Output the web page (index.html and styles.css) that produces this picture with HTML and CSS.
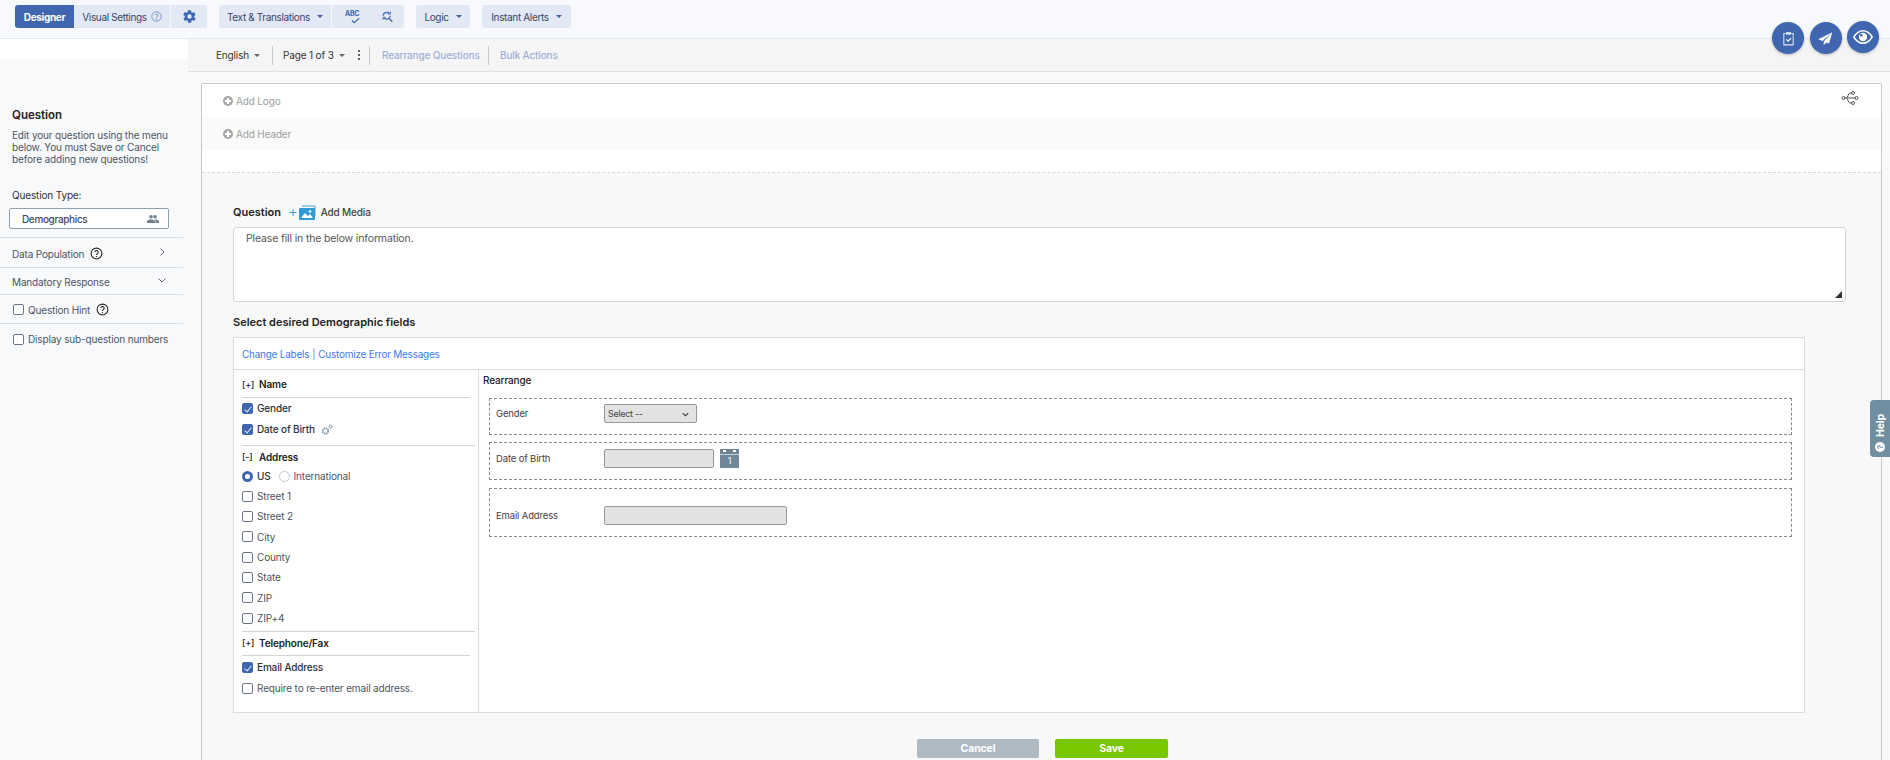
FILE: index.html
```html
<!DOCTYPE html>
<html lang="en">
<head>
<meta charset="utf-8">
<title>Question Designer</title>
<link rel="stylesheet" href="styles.css">
</head>
<body>
<header class="topbar">
  <div class="group">
    <button class="tb active w-designer">Designer</button>
    <button class="tb w-visual">Visual Settings
      <svg class="q" viewBox="0 0 14 14"><circle cx="7" cy="7" r="6" fill="none" stroke="#5f7fb8"/><path d="M5.2 5.5a1.8 1.8 0 1 1 2.7 1.6c-.6.4-.9.7-.9 1.4" fill="none" stroke="#5f7fb8"/><circle cx="7" cy="10.4" r=".7" fill="#5f7fb8"/></svg>
    </button>
    <button class="tb w-gear"><svg class="ic15" viewBox="0 0 24 24"><path fill="#3f66ae" d="M19.4 13a7.5 7.5 0 0 0 0-2l2.1-1.6a.5.5 0 0 0 .1-.7l-2-3.4a.5.5 0 0 0-.6-.2l-2.5 1a7.4 7.4 0 0 0-1.7-1l-.4-2.7a.5.5 0 0 0-.5-.4h-4a.5.5 0 0 0-.5.4l-.4 2.7a7.4 7.4 0 0 0-1.7 1l-2.5-1a.5.5 0 0 0-.6.2l-2 3.4a.5.5 0 0 0 .1.7L4.6 11a7.5 7.5 0 0 0 0 2l-2.1 1.6a.5.5 0 0 0-.1.7l2 3.4c.1.2.4.3.6.2l2.5-1a7.4 7.4 0 0 0 1.7 1l.4 2.7c0 .2.3.4.5.4h4c.2 0 .5-.2.5-.4l.4-2.7a7.4 7.4 0 0 0 1.7-1l2.5 1c.2.1.5 0 .6-.2l2-3.4a.5.5 0 0 0-.1-.7zM12 15.5a3.5 3.5 0 1 1 0-7 3.5 3.5 0 0 1 0 7z"/></svg></button>
  </div>
  <div class="group g-next">
    <button class="tb w-text">Text &amp; Translations <i class="caret"></i></button>
    <button class="tb w-spell">
      <span class="abc">ABC<svg class="abc-check" viewBox="0 0 10 7"><path d="M1 3.5l2.6 2.5L9 1" fill="none" stroke="#3f66ae" stroke-width="1.3"/></svg></span>
      <svg class="ic13" viewBox="0 0 16 16"><path d="M2.5 7a4.5 4.5 0 0 1 7.8-2.6M11.5 7a4.5 4.5 0 0 1-7.8 2.6" fill="none" stroke="#3f66ae" stroke-width="1.5"/><path d="M8.5 5h3V2M5.5 9h-3v3" fill="none" stroke="#3f66ae" stroke-width="1.2"/><path d="M10 10.5l4 4" stroke="#3f66ae" stroke-width="1.6"/></svg>
    </button>
  </div>
  <div class="group g-next"><button class="tb w-logic">Logic <i class="caret"></i></button></div>
  <div class="group g-next"><button class="tb w-alert">Instant Alerts <i class="caret"></i></button></div>
</header>

<div class="fabs">
  <button class="fab"><svg viewBox="0 0 20 20" class="fab-ic"><path d="M6.500 4H4.500v13.500h11V4h-2" fill="none" stroke="#dfe6f4" stroke-width="1.200"/><path d="M7 2.500h6v3H7z" fill="#dfe6f4"/><path d="M7.500 11l2 2 3.500-3.500" fill="none" stroke="#fff" stroke-width="1.400"/></svg></button>
  <button class="fab"><svg viewBox="0 0 20 20" class="fab-ic"><path d="M18 2.500L1.500 11l5 1.800zM18 2.500L8 13.500l-.2 4.500 3.400-3.300 3 1.300z" fill="#fff"/></svg></button>
  <button class="fab up"><svg viewBox="0 0 24 24" class="fab-eye"><path d="M1 12c3-5 7-7.500 11-7.500S20 7 23 12c-3 5-7 7.500-11 7.500S4 17 1 12z" fill="none" stroke="#fff" stroke-width="1.800"/><circle cx="12" cy="12" r="5" fill="#fff"/><circle cx="10" cy="10" r="1.500" fill="#3f66ae"/></svg></button>
</div>

<div class="body">
  <aside class="side">
    <div class="side-blank"></div>
    <div class="side-intro">
      <h2 class="side-title">Question</h2>
      <p class="side-text">Edit your question using the menu below. You must Save or Cancel before adding new questions!</p>
      <div class="side-label">Question Type:</div>
      <div class="type-select"><span>Demographics</span>
        <svg class="ic12" viewBox="0 0 24 24"><path fill="#6f7f90" d="M16 11a3.500 3.500 0 1 0 0-7 3.500 3.500 0 0 0 0 7zm-8 0a3.500 3.500 0 1 0 0-7 3.500 3.500 0 0 0 0 7zm0 2c-2.700 0-8 1.300-8 4v3h16v-3c0-2.700-5.300-4-8-4zm8 0h-1c1.200.9 2 2.100 2 4v3h7v-3c0-2.700-5.300-4-8-4z"/></svg>
      </div>
    </div>
    <div class="side-row h30"><span>Data Population</span>
      <svg class="help-ic" viewBox="0 0 14 14"><circle cx="7" cy="7" r="5.800" fill="none" stroke="#222" stroke-width="1.100"/><path d="M5.200 5.500a1.800 1.800 0 1 1 2.700 1.600c-.6.400-.9.700-.9 1.400" fill="none" stroke="#222" stroke-width="1.100"/><circle cx="7" cy="10.300" r=".7" fill="#222"/></svg>
      <svg class="chev" viewBox="0 0 10 10"><path d="M3.500 1.500L7 5 3.500 8.500" fill="none" stroke="#667" stroke-width="1"/></svg>
    </div>
    <div class="side-row h27"><span>Mandatory Response</span>
      <svg class="chev" viewBox="0 0 10 10"><path d="M1.500 3.500L5 7l3.500-3.500" fill="none" stroke="#667" stroke-width="1"/></svg>
    </div>
    <div class="side-row h29"><i class="cb"></i><span>Question Hint</span>
      <svg class="help-ic" viewBox="0 0 14 14"><circle cx="7" cy="7" r="5.800" fill="none" stroke="#222" stroke-width="1.100"/><path d="M5.200 5.500a1.800 1.800 0 1 1 2.700 1.600c-.6.400-.9.700-.9 1.400" fill="none" stroke="#222" stroke-width="1.100"/><circle cx="7" cy="10.300" r=".7" fill="#222"/></svg>
    </div>
    <div class="side-row h29 last"><i class="cb"></i><span>Display sub-question numbers</span></div>
  </aside>

  <main class="main">
    <nav class="subbar">
      <span class="sub-item w-eng">English <i class="caret grey"></i></span>
      <span class="sub-item w-page">Page 1 of 3 <i class="caret grey"></i><i class="dots"></i></span>
      <span class="sub-link w-rearr">Rearrange Questions</span>
      <span class="sub-link">Bulk Actions</span>
    </nav>
    <div class="canvas">
      <section class="frame">
        <div class="head-row h-logo"><span class="plus"></span>Add Logo
          <svg class="usb" viewBox="0 0 18 16"><g fill="none" stroke="#555" stroke-width="1"><path d="M3 8h12M5.500 8c1.500 0 1.500-5 3.500-5h1.500M5.500 8c1.500 0 1.500 5 3.500 5h1.500"/><circle cx="2.500" cy="8" r="1.500"/><circle cx="12" cy="3" r="1.500"/><circle cx="12" cy="13" r="1.500"/><circle cx="15.500" cy="8" r="1.500"/></g></svg>
        </div>
        <div class="head-row h-header"><span class="plus"></span>Add Header</div>
        <div class="head-gap"></div>
        <div class="editor">
          <div class="q-line"><strong>Question</strong>
            <span class="media-plus">+</span>
            <svg class="media" viewBox="0 0 18 15"><path d="M3 1h13v10" fill="none" stroke="#4aa3d8"/><rect x="0" y="3" width="16" height="12" rx="1" fill="#2f9ad6"/><path d="M2 13l4-5 3 3 2-2 3 4z" fill="#fff"/><circle cx="11" cy="6.500" r="1.300" fill="#fff"/></svg>
            <span class="media-text">Add Media</span>
          </div>
          <div class="qbox">Please fill in the below information.
            <svg class="grip" viewBox="0 0 7 7"><path d="M7 0v7H0z" fill="#333"/></svg>
          </div>
          <h3 class="sel-title">Select desired Demographic fields</h3>
          <div class="panel">
            <div class="panel-top"><a>Change Labels</a> <span class="bar">|</span> <a>Customize Error Messages</a></div>
            <div class="panel-body">
              <div class="fields">
                <div class="fhead h-name"><b class="tog">[+]</b><b>Name</b></div>
                <div class="rule short"></div>
                <label class="fld on h20"><i class="cb chk"></i>Gender</label>
                <label class="fld on h22"><i class="cb chk"></i>Date of Birth
                  <svg class="gears" viewBox="0 0 12 11"><circle cx="4.500" cy="7" r="2.700" fill="none" stroke="#7d8f9c" stroke-width="1.700" stroke-dasharray="1.500 .6"/><circle cx="9.500" cy="2.500" r="1.500" fill="none" stroke="#7d8f9c" stroke-width="1"/></svg>
                </label>
                <div class="rule r-a"></div>
                <div class="fhead"><b class="tog">[-]</b><b>Address</b></div>
                <div class="radios"><i class="rd sel"></i><span class="dark">US</span><i class="rd"></i><span>International</span></div>
                <label class="fld"><i class="cb"></i>Street 1</label>
                <label class="fld"><i class="cb"></i>Street 2</label>
                <label class="fld"><i class="cb"></i>City</label>
                <label class="fld"><i class="cb"></i>County</label>
                <label class="fld"><i class="cb"></i>State</label>
                <label class="fld"><i class="cb"></i>ZIP</label>
                <label class="fld"><i class="cb"></i>ZIP+4</label>
                <div class="rule r-b"></div>
                <div class="fhead"><b class="tog">[+]</b><b>Telephone/Fax</b></div>
                <div class="rule short r-c"></div>
                <label class="fld on h22"><i class="cb chk"></i>Email Address</label>
                <label class="fld h20"><i class="cb"></i>Require to re-enter email address.</label>
              </div>
              <div class="arrange">
                <div class="arr-title">Rearrange</div>
                <div class="dbox b-g"><span class="dlabel">Gender</span>
                  <div class="ctl sel-ctl">Select --<svg class="sel-chev" viewBox="0 0 10 10"><path d="M2 3.500L5 6.500l3-3" fill="none" stroke="#333" stroke-width="1.200"/></svg></div>
                </div>
                <div class="dbox b-d"><span class="dlabel">Date of Birth</span>
                  <div class="ctl date-ctl"></div>
                  <div class="cal"><span class="cal-top"></span><span class="cal-day">1</span></div>
                </div>
                <div class="dbox b-e"><span class="dlabel">Email Address</span>
                  <div class="ctl mail-ctl"></div>
                </div>
              </div>
            </div>
          </div>
          <div class="actions">
            <button class="btn cancel">Cancel</button>
            <button class="btn save">Save</button>
          </div>
        </div>
      </section>
    </div>
  </main>
</div>

<button class="help-tab"><span class="help-dot">?</span><span>Help</span></button>
</body>
</html>
```

FILE: styles.css
```css
* { box-sizing: border-box; }
html, body { margin: 0; height: 760px; overflow: hidden; }
body { font-family: Inter, "Liberation Sans", sans-serif; font-size: 10px; letter-spacing: -.15px; color: #333; background: #f8f9fb; position: relative; }
button { font: inherit; letter-spacing: inherit; border: 0; padding: 0; cursor: pointer; }
h2, h3, p { margin: 0; }

.topbar { height: 39px; background: #f8f9fc; border-bottom: 1px solid #e3e8f5; display: flex; align-items: flex-start; padding: 5px 0 0 15px; }
.group { display: flex; gap: 1px; flex: none; }
.g-next { margin-left: 12px; }
.tb { flex: none; height: 23px; background: #e3e8f5; color: #34466a; display: flex; align-items: center; justify-content: center; gap: 4px; white-space: nowrap; letter-spacing: -.35px; }
.group .tb:first-child { border-radius: 3px 0 0 3px; }
.group .tb:last-child { border-radius: 0 3px 3px 0; }
.group .tb:only-child { border-radius: 3px; }
.tb.active { background: #3f66ae; color: #fff; font-weight: 700; }
.w-designer { width: 59px; margin-right: -1px; }
.w-visual { width: 96px; }
.w-gear { width: 36px; }
.w-text { width: 112px; }
.w-spell { width: 72px; gap: 19px; }
.w-logic { width: 54px; }
.w-alert { width: 89px; }
.q { width: 11px; height: 11px; }
.ic13 { width: 13px; height: 13px; }
.ic15 { width: 15px; height: 15px; }
.caret { display: inline-block; width: 0; height: 0; border: 3px solid transparent; border-top: 3px solid #3f5f96; border-bottom: 0; margin-left: 3px; }
.caret.grey { border-top-color: #666; }
.abc { font-size: 7px; font-weight: 700; color: #3f66ae; position: relative; display: block; height: 15px; width: 19px; line-height: 9px; }
.abc-check { position: absolute; left: 8px; top: 8px; width: 9px; height: 7px; }

.fabs { position: absolute; left: 1772px; top: 22px; display: flex; gap: 5.500px; }
.fab { width: 32px; height: 32px; border-radius: 50%; background: #3f66ae; display: flex; align-items: center; justify-content: center; box-shadow: 0 1px 3px rgba(0,0,0,.25); }
.fab.up { margin-top: -1px; }
.fab-ic { width: 17px; height: 17px; }
.fab-eye { width: 20px; height: 20px; }

.body { display: flex; height: 721px; }
.side { width: 188px; flex: none; background: #f8f9fb; padding-right: 5px; }
.side-blank { height: 20px; background: #fff; margin-right: -5px; }
.side-intro { height: 179px; border-bottom: 1px solid #d9dfe3; padding: 49px 0 0 12px; }
.side-title { font-size: 11.500px; font-weight: 600; color: #222; line-height: 14px; letter-spacing: 0; }
.side-text { margin-top: 7px; line-height: 12px; color: #4b5563; width: 165px; }
.side-label { margin-top: 23px; color: #333; line-height: 14px; }
.type-select { margin: 6px 0 0 -3px; width: 160px; height: 21px; background: #fff; border: 1px solid #8fa0ac; border-radius: 2px; display: flex; align-items: center; justify-content: space-between; padding: 0 9px 0 12px; color: #3f4a5a; font-weight: 500; letter-spacing: -.35px; }
.ic12 { width: 12px; height: 12px; }
.side-row { display: flex; align-items: center; padding: 1px 0 0 12px; border-bottom: 1px solid #d9dfe3; color: #4b5563; position: relative; }
.side-row.last { border-bottom: 0; }
.side-row .cb { margin-left: 1px; margin-right: 4px; }
.h30 { height: 30px; padding-top: 2px; }
.h27 { height: 27px; }
.h29 { height: 29px; }
.help-ic { width: 13px; height: 13px; margin-left: 6px; }
.chev { position: absolute; left: 157px; top: 50%; margin-top: -6px; width: 10px; height: 10px; }
.cb { display: inline-block; flex: none; width: 11px; height: 11px; border: 1px solid #6b7688; border-radius: 2px; background: #fff; margin-right: 4px; position: relative; }
.cb.chk { background: #3f66ae; border-color: #3f66ae; }
.cb.chk::after { content: ""; position: absolute; left: 3px; top: 1px; width: 3px; height: 6px; border: solid #dfe6f4; border-width: 0 1px 1px 0; transform: rotate(40deg); }

.main { flex: 1; min-width: 0; display: flex; flex-direction: column; }
.subbar { height: 33px; background: #f5f5f5; border-bottom: 1px solid #e2e2e2; display: flex; align-items: center; padding-left: 28px; }
.sub-item { display: flex; align-items: center; color: #333; white-space: nowrap; gap: 2px; height: 19px; border-right: 1px solid #c9c9c9; flex: none; }
.w-eng { width: 57px; }
.w-page { width: 97px; padding-left: 10px; position: relative; }
.dots { position: absolute; left: 85px; top: 4px; width: 2px; height: 2px; background: #333; box-shadow: 0 4px 0 #333, 0 8px 0 #333; border-radius: 50%; }
.sub-link { color: #9fb1d4; font-weight: 500; white-space: nowrap; height: 19px; display: flex; align-items: center; padding-left: 11px; flex: none; }
.w-rearr { width: 119px; padding-left: 12px; border-right: 1px solid #c9c9c9; }
.canvas { flex: 1; min-height: 0; padding: 11px 8px 0 13px; }
.frame { height: 100%; background: #f8f8f8; border: 1px solid #c9c9c9; border-bottom: 0; border-radius: 2px 2px 0 0; }
.head-row { position: relative; display: flex; align-items: center; padding-left: 21px; color: #a0a0a0; }
.h-logo { height: 34px; background: #fff; }
.h-header { height: 32px; background: #fafafa; padding-bottom: 1px; }
.head-gap { height: 23px; background: #fff; border-bottom: 1px dashed #cfdbe3; }
.plus { width: 10px; height: 10px; border-radius: 50%; background: #a8a8a8; margin-right: 3px; position: relative; }
.plus::before { content: ""; position: absolute; left: 2px; top: 4px; width: 6px; height: 2px; background: #fff; }
.plus::after { content: ""; position: absolute; left: 4px; top: 2px; width: 2px; height: 6px; background: #fff; }
.usb { position: absolute; left: 1639px; top: 6px; width: 18px; height: 16px; }

.editor { padding: 31px 0 0 31px; }
.q-line { display: flex; align-items: center; height: 16px; color: #222; }
.q-line strong { font-size: 11px; font-weight: 600; letter-spacing: 0; }
.media-plus { margin-left: 7px; color: #2f9ad6; font-size: 15px; line-height: 14px; font-weight: 300; }
.media { width: 18px; height: 15px; margin-left: 1px; }
.media-text { margin-left: 4px; color: #444; font-weight: 500; }
.qbox { position: relative; margin-top: 7px; width: 1613px; height: 75px; background: #fff; border: 1px solid #d5d5d5; border-radius: 3px; padding: 4px 12px; color: #555; font-size: 10.500px; line-height: 14px; }
.grip { position: absolute; right: 3px; bottom: 3px; width: 7px; height: 7px; }
.sel-title { margin-top: 13px; font-size: 11px; font-weight: 600; color: #222; line-height: 14px; letter-spacing: 0; }
.panel { margin-top: 8px; width: 1572px; height: 376px; background: #fff; border: 1px solid #dcdcdc; }
.panel-top { height: 32px; border-bottom: 1px solid #dcdcdc; display: flex; align-items: center; padding-left: 8px; gap: 3px; color: #6f8fd0; letter-spacing: -.25px; }
.panel-top a { color: #3d7bf0; }
.panel-body { display: flex; height: 342px; }
.fields { width: 245px; flex: none; border-right: 1px solid #dcdcdc; padding: 0 3px 0 8px; }
.fhead { display: flex; align-items: center; color: #222; height: 20px; padding-top: 1px; }
.fhead b { font-weight: 600; }
.tog { width: 17px; flex: none; font-size: 9px; font-weight: 500 !important; }
.rule { height: 1px; background: #d5d5d5; }
.rule.short { width: 228px; }
.h-name { height: 27px; padding-top: 1px; }
.fld { display: flex; align-items: center; height: 20.330px; color: #4b5563; white-space: nowrap; }
.fld.on { color: #2a3140; font-weight: 500; }
.fld.h20 { height: 20px; }
.fld.h22 { height: 22px; }
.gears { width: 12px; height: 11px; margin-left: 6px; }
.r-a { margin-top: 5px; }
.radios { display: flex; align-items: center; height: 20px; color: #4b5563; }
.rd { width: 11px; height: 11px; border-radius: 50%; border: 1px solid #c8c8c8; background: #fff; margin-right: 4px; }
.rd.sel { border: 3px solid #3f66ae; }
.radios span { margin-right: 8px; }
.radios .dark { color: #2a3140; font-weight: 500; }
.r-b { margin-top: 3px; }
.r-c { margin-top: 3px; }
.arrange { flex: 1; padding: 0 0 0 4px; }
.arr-title { color: #222; font-weight: 500; line-height: 14px; margin-top: 3px; }
.dbox { width: 1303px; margin-left: 6px; border: 1px dashed #8a8a8a; display: flex; align-items: flex-start; padding-left: 6px; }
.b-g { height: 37px; margin-top: 11px; padding-top: 5px; }
.b-d { height: 38px; margin-top: 7px; padding-top: 6px; }
.b-e { height: 49px; margin-top: 8px; padding-top: 17px; }
.dlabel { width: 108px; flex: none; color: #4a3a44; font-size: 9.500px; line-height: 20px; }
.ctl { height: 19px; background: #e2e2e2; border: 1px solid #999; border-radius: 2px; font-size: 9px; color: #444; line-height: 17px; padding-left: 3px; position: relative; letter-spacing: -.3px; }
.sel-ctl { width: 93px; }
.sel-chev { position: absolute; right: 6px; top: 5px; width: 9px; height: 9px; }
.date-ctl { width: 110px; }
.mail-ctl { width: 183px; }
.cal { width: 19px; height: 19px; margin-left: 6px; background: #6f8696; position: relative; color: #fff; font-size: 9px; text-align: center; line-height: 24px; }
.cal-top { position: absolute; left: 3px; top: 1px; width: 3px; height: 2px; background: #fff; box-shadow: 10px 0 0 #fff; }
.cal::after { content: ""; position: absolute; left: 0; right: 0; top: 5px; height: 1px; background: #c9d3da; }
.cal-day { position: relative; }

.actions { display: flex; width: 1572px; justify-content: center; gap: 16px; margin-top: 26px; padding-left: 47px; }
.btn { height: 19px; border-radius: 2px; color: #fff; font-weight: 700; font-size: 10.500px; }
.cancel { width: 122px; background: #afbac3; }
.save { width: 113px; background: #78c800; }

.help-tab { position: absolute; left: 1870px; top: 400px; width: 20px; height: 57px; background: #6f8ea0; color: #fff; font-weight: 700; border-radius: 4px 0 0 4px; display: flex; flex-direction: column-reverse; align-items: center; justify-content: flex-start; gap: 5px; padding: 5px 0; }
.help-tab span:last-child { writing-mode: vertical-rl; transform: rotate(180deg); font-size: 10.500px; }
.help-dot { width: 10px; height: 10px; border-radius: 50%; background: #fff; color: #6f8ea0; font-size: 8px; line-height: 10px; text-align: center; transform: rotate(-90deg); }
```
